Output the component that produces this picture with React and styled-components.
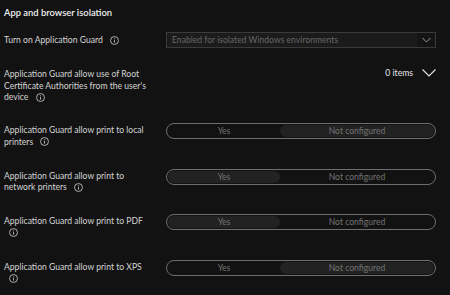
import React from 'react'
import styled, { createGlobalStyle } from 'styled-components'

const GlobalStyle = createGlobalStyle`
  html, body {
    margin: 0;
    padding: 0;
    background: #121212;
  }
  body {
    font-family: Lato, "Noto Sans", sans-serif;
    color: #d6d6d6;
  }
`

const Page = styled.div`
  width: 450px;
  height: 295px;
  overflow: hidden;
  background: #121212;
  padding: 5px 14px 0 4px;
  box-sizing: border-box;
`

const Heading = styled.h2`
  margin: 0 0 11px;
  font-size: 9.4px;
  font-weight: 600;
  color: #f0f0f0;
  line-height: 16px;
`

const Row = styled.div`
  display: grid;
  grid-template-columns: 162px 1fr;
  align-items: start;
  height: ${p => p.$h}px;
`

const Label = styled.div`
  width: 152px;
  font-size: 8.6px;
  line-height: ${p => p.$lh || 11.5}px;
  color: #d4d4d4;
`

const InfoWrap = styled.span`
  display: inline-block;
  margin-left: 5px;
  vertical-align: -1.5px;
`

const Info = () => (
  <InfoWrap>
    <svg width="9" height="9" viewBox="0 0 10 10">
      <circle cx="5" cy="5" r="4.4" fill="none" stroke="#cfcfcf" strokeWidth="0.9" />
      <circle cx="5" cy="3" r="0.6" fill="#cfcfcf" />
      <line x1="5" y1="4.4" x2="5" y2="7.4" stroke="#cfcfcf" strokeWidth="0.9" />
    </svg>
  </InfoWrap>
)

const Select = styled.div`
  display: flex;
  height: 16px;
  border: 1px solid #3a3a3a;
  background: #1b1b1b;
  box-sizing: border-box;
`

const SelectText = styled.div`
  flex: 1;
  font-size: 8.6px;
  line-height: 14px;
  color: #666666;
  padding-left: 5px;
`

const SelectArrow = styled.div`
  width: 18px;
  display: flex;
  align-items: center;
  justify-content: center;
  background: #141414;
`

const Items = styled.div`
  display: flex;
  justify-content: flex-end;
  align-items: center;
  gap: 9px;
  font-size: 8.6px;
  line-height: 12px;
  color: #e8e8e8;
  margin-top: -2px;
`

const Toggle = styled.div`
  display: grid;
  grid-template-columns: 112px 1fr;
  height: 16px;
  border: 1px solid #6e6e6e;
  border-radius: 8px;
  box-sizing: border-box;
  padding: 1px;
  margin-top: -2.25px;
`

const Seg = styled.div`
  border-radius: 7px;
  background: ${p => (p.$on ? '#222222' : 'transparent')};
  color: #727272;
  font-size: 8.6px;
  line-height: 12px;
  text-align: center;
`

const rows = [
  { label: 'Application Guard allow print to local printers', on: 1 },
  { label: 'Application Guard allow print to network printers', on: 0 },
  { label: 'Application Guard allow print to PDF', on: 0 },
  { label: 'Application Guard allow print to XPS', on: 1 },
]

export default function App() {
  return (
    <Page>
      <GlobalStyle />
      <Heading>App and browser isolation</Heading>
      <Row $h={37.25}>
        <Label $lh={16}>
          Turn on Application Guard <Info />
        </Label>
        <Select>
          <SelectText>Enabled for isolated Windows environments</SelectText>
          <SelectArrow>
            <svg width="9" height="6" viewBox="0 0 9 6">
              <polyline points="0.5,1 4.5,5 8.5,1" fill="none" stroke="#9a9a9a" strokeWidth="1" />
            </svg>
          </SelectArrow>
        </Select>
      </Row>
      <Row $h={56}>
        <Label>
          Application Guard allow use of Root Certificate Authorities from the user's device <Info />
        </Label>
        <Items>
          <span>0 items</span>
          <svg width="14" height="8" viewBox="0 0 14 8">
            <polyline points="0.5,0.5 7,7 13.5,0.5" fill="none" stroke="#e8e8e8" strokeWidth="1.1" />
          </svg>
        </Items>
      </Row>
      {rows.map((r, i) => (
        <Row key={i} $h={45.5}>
          <Label>
            {r.label} <Info />
          </Label>
          <Toggle>
            <Seg $on={r.on === 0}>Yes</Seg>
            <Seg $on={r.on === 1}>Not configured</Seg>
          </Toggle>
        </Row>
      ))}
    </Page>
  )
}
